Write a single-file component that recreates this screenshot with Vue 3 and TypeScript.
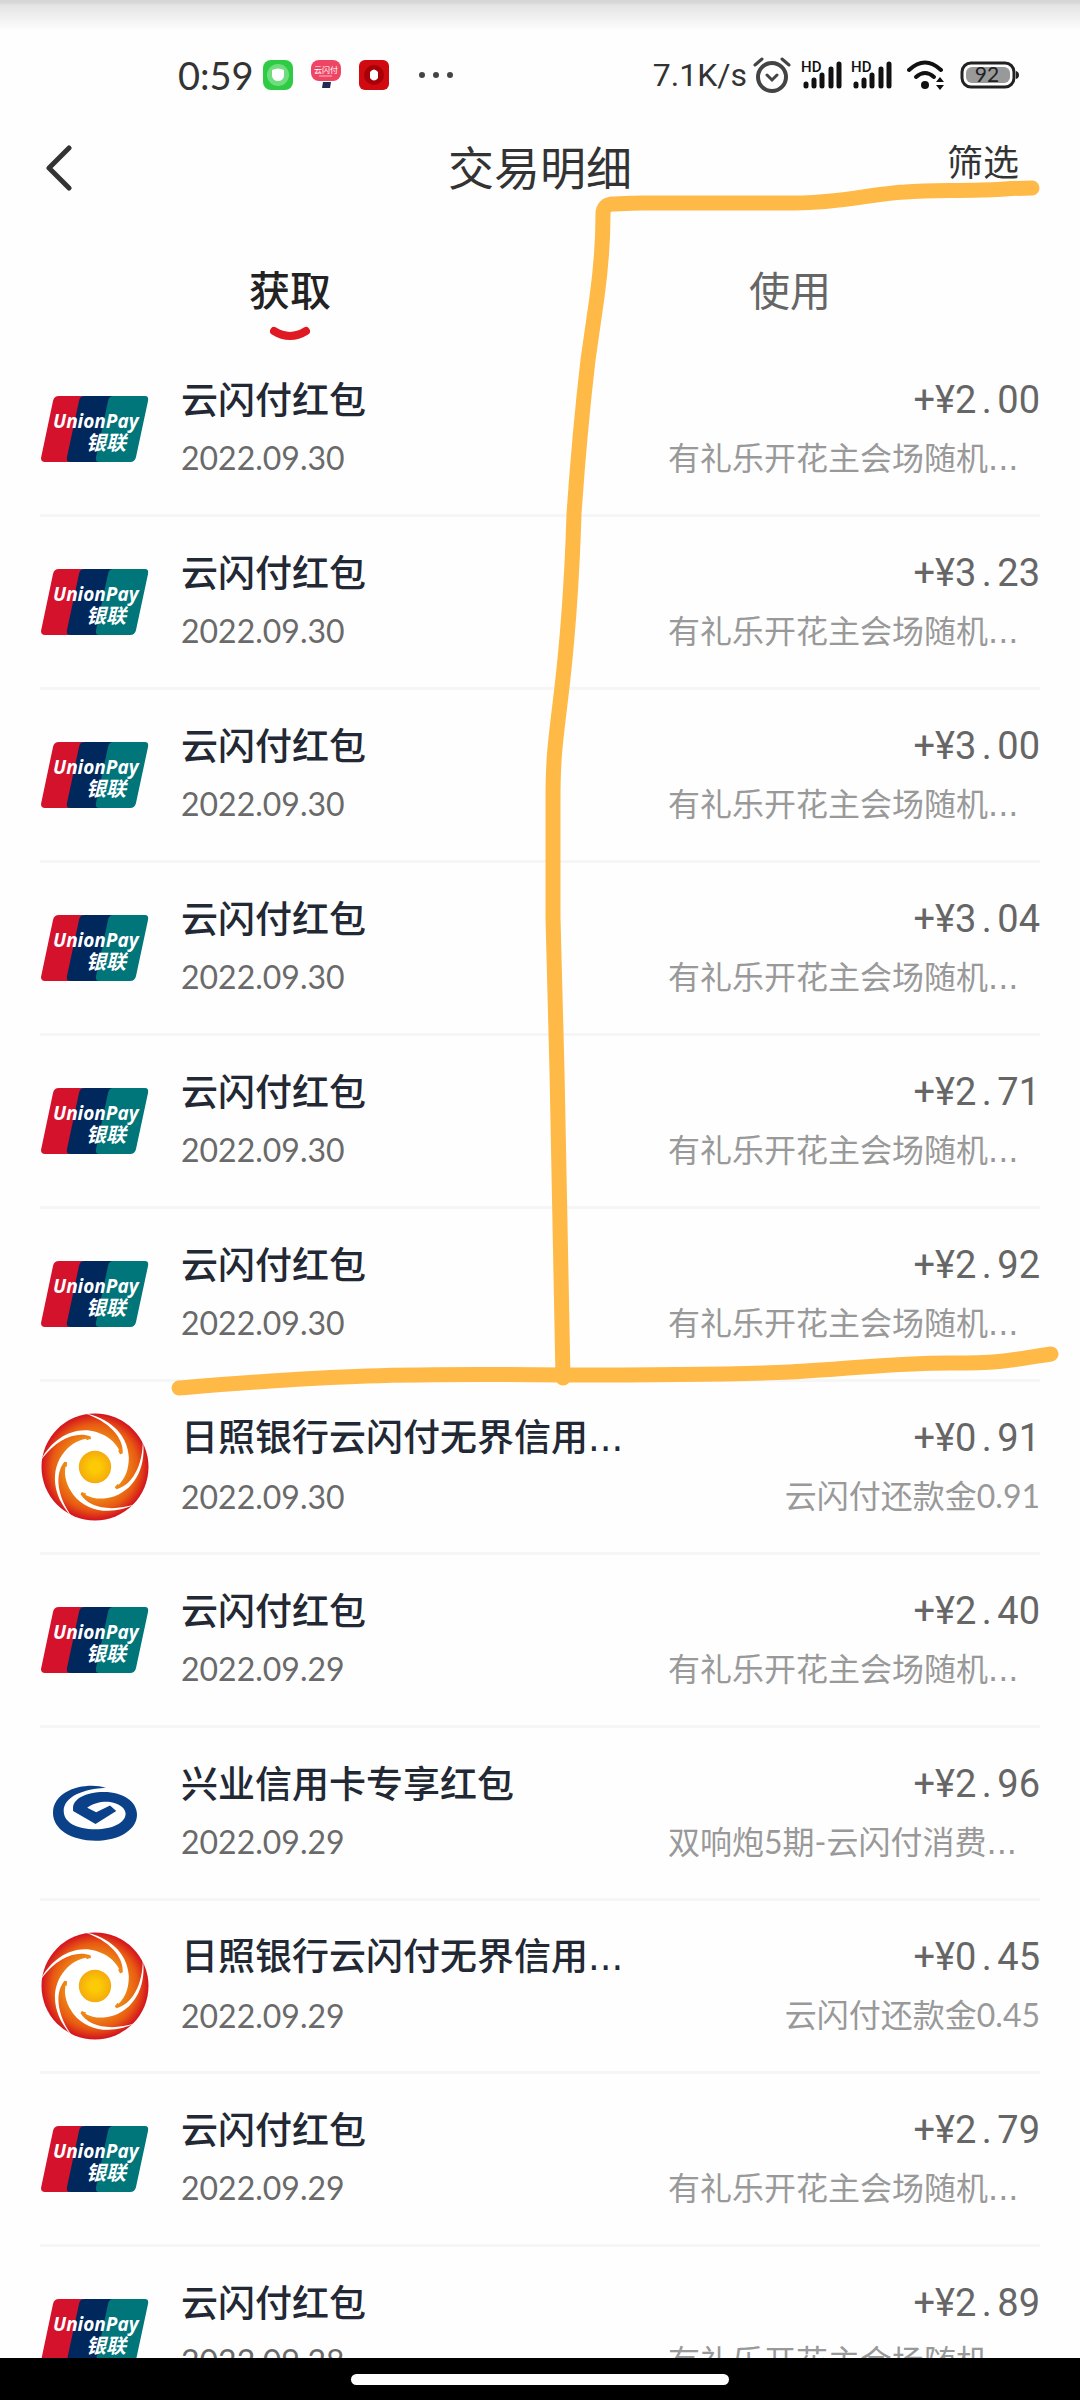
<script setup lang="ts">
import { ref } from 'vue'

type Logo = 'unionpay' | 'rizhao' | 'xingye'

interface Entry {
  logo: Logo
  name: string
  date: string
  amount: string
  note: string
  cut?: boolean
  nameCut?: boolean
}

const promo = '有礼乐开花主会场随机'

const packet = (date: string, amount: string): Entry => ({
  logo: 'unionpay',
  name: '云闪付红包',
  date,
  amount,
  note: promo,
  cut: true,
})

const rebate = (date: string, amount: string): Entry => ({
  logo: 'rizhao',
  name: '日照银行云闪付无界信用',
  nameCut: true,
  date,
  amount,
  note: '云闪付还款金' + amount,
})

const entries: Entry[] = [
  packet('2022.09.30', '2.00'),
  packet('2022.09.30', '3.23'),
  packet('2022.09.30', '3.00'),
  packet('2022.09.30', '3.04'),
  packet('2022.09.30', '2.71'),
  packet('2022.09.30', '2.92'),
  rebate('2022.09.30', '0.91'),
  packet('2022.09.29', '2.40'),
  {
    logo: 'xingye',
    name: '兴业信用卡专享红包',
    date: '2022.09.29',
    amount: '2.96',
    note: '双响炮5期-云闪付消费',
    cut: true,
  },
  rebate('2022.09.29', '0.45'),
  packet('2022.09.29', '2.79'),
  packet('2022.09.28', '2.89'),
]

const tabs = ['获取', '使用']
const active = ref(0)
const blades = [0, 72, 144, 216, 288]
</script>

<template>
  <div class="app">
    <div class="status">
      <div class="status-left">
        <span class="clock">0:59</span>
        <svg class="badge" viewBox="0 0 32 32">
          <rect x="1" y="1" width="30" height="30" rx="8" fill="#2fcb45" />
          <circle cx="16" cy="16" r="11" fill="#6fdd7c" />
          <path d="M10 11 Q16 8 22 11 L22 17 Q21 22 16 22 Q11 22 10 17 Z" fill="#fff" />
        </svg>
        <svg class="badge" viewBox="0 0 32 32">
          <path d="M13 23 L21 23 L20 29 L12 29 Z" fill="#1d2c50" />
          <rect x="1" y="1" width="30" height="21" rx="8" fill="#ee4565" />
          <text x="16" y="14" text-anchor="middle" font-size="8" fill="#fff">云闪付</text>
          <path d="M9 17 H22" stroke="#ffb8c4" stroke-width="1" />
        </svg>
        <svg class="badge" viewBox="0 0 32 32">
          <rect x="1" y="1" width="30" height="30" rx="6" fill="#d00a10" />
          <circle cx="16" cy="16" r="10" fill="#a80008" />
          <path d="M12 13 Q16 8 20 13 L20 19 Q16 24 12 19 Z" fill="#fff" />
        </svg>
        <svg class="more" viewBox="0 0 34 8">
          <g fill="#444">
            <circle cx="3" cy="4" r="3" />
            <circle cx="17" cy="4" r="3" />
            <circle cx="31" cy="4" r="3" />
          </g>
        </svg>
      </div>
      <div class="status-right">
        <span class="speed">7.1K/s</span>
        <svg class="alarm" viewBox="0 0 38 36" fill="none" stroke="#444" stroke-width="4" stroke-linecap="round">
          <circle cx="19" cy="20" r="14" />
          <path d="M14 18 L19 23 L24 18 M2 8 L9 2 M29 2 L36 8" stroke-width="3" />
        </svg>
        <svg v-for="n in 2" :key="n" class="signal" viewBox="0 0 42 32">
          <text x="0" y="13" font-size="15" font-weight="500" fill="#111">HD</text>
          <g stroke="#111" stroke-width="5" stroke-linecap="round">
            <path d="M5 25 V27 M13 21 V27 M21 16 V27 M30 10 V27 M38 5 V27" />
          </g>
        </svg>
        <svg class="wifi" viewBox="0 0 38 32">
          <g fill="none" stroke="#111" stroke-width="4" stroke-linecap="round">
            <path d="M2 11 Q18 -4 34 11" />
            <path d="M9 18 Q18 10 27 18" />
          </g>
          <circle cx="18" cy="26" r="4" fill="#111" />
          <path d="M29 23 L33 18 L37 23 Z M29 26 L33 31 L37 26 Z" fill="#111" />
        </svg>
        <svg class="battery" viewBox="0 0 60 28">
          <rect x="2" y="2" width="52" height="24" rx="9" fill="none" stroke="#222" stroke-width="3" />
          <rect x="6" y="6" width="44" height="16" rx="6" fill="#999" />
          <path d="M56 10 Q59 11 59 14 Q59 17 56 18 Z" fill="#222" />
          <text x="27" y="21" text-anchor="middle" font-size="21" fill="#222">92</text>
        </svg>
      </div>
    </div>

    <header class="bar">
      <button class="back" type="button" aria-label="返回">
        <svg viewBox="0 0 26 46">
          <path d="M23 3 L3 23 L23 43" fill="none" stroke="#333" stroke-width="5" stroke-linecap="round" stroke-linejoin="round" />
        </svg>
      </button>
      <h1>交易明细</h1>
      <button class="filter" type="button">筛选</button>
    </header>

    <nav class="tabs">
      <button
        v-for="(tab, i) in tabs"
        :key="tab"
        type="button"
        class="tab"
        :class="{ on: i === active }"
        @click="active = i"
      >
        {{ tab }}
        <svg v-if="i === active" class="smile" viewBox="0 0 40 16">
          <path d="M4 5 Q20 15 36 5" fill="none" stroke="#e01a22" stroke-width="8" stroke-linecap="round" />
        </svg>
      </button>
    </nav>

    <ul class="list">
      <li v-for="(e, i) in entries" :key="i" class="row">
        <div class="logo">
          <svg v-if="e.logo === 'unionpay'" width="108" height="66" viewBox="0 0 108 66">
            <path d="M18 0 H42 L28 66 H4 Q0 66 0 62 L12 5 Q13 0 18 0 Z" fill="#d4122c" />
            <path d="M43 0 H76 V66 H29 Q25 66 26 61 L38 5 Q39 0 43 0 Z" fill="#00285c" />
            <path d="M72 0 H104 Q108 0 107 5 L95 61 Q94 66 89 66 H58 Q54 66 55 61 L67 5 Q68 0 72 0 Z" fill="#00757a" />
            <text class="up-en" x="12" y="32">UnionPay</text>
            <text class="up-cn" x="45" y="54">银联</text>
          </svg>
          <svg v-else-if="e.logo === 'rizhao'" width="108" height="108" viewBox="0 0 107 107">
            <defs>
              <radialGradient :id="'flame' + i" gradientUnits="userSpaceOnUse" cx="53.5" cy="53.5" r="53">
                <stop offset="0.55" stop-color="#ee8a16" />
                <stop offset="0.8" stop-color="#e85a12" />
                <stop offset="1" stop-color="#d3121f" />
              </radialGradient>
              <radialGradient :id="'sun' + i">
                <stop offset="0.3" stop-color="#fccb05" />
                <stop offset="1" stop-color="#f5ab0c" />
              </radialGradient>
            </defs>
            <circle cx="53.5" cy="53.5" r="53" :fill="`url(#flame${i})`" />
            <circle cx="53.5" cy="53.5" r="28" fill="#fff" />
            <path
              v-for="a in blades"
              :key="a"
              d="M42 0 C66 4 86 20 87 44 C87 55 84 64 77 71 L53 53 L81 40 C82 25 68 8 42 0 Z"
              fill="#fff"
              :transform="`rotate(${a} 53.5 53.5)`"
            />
            <circle cx="53.5" cy="53.5" r="16" :fill="`url(#sun${i})`" />
          </svg>
          <svg v-else width="84" height="56" viewBox="97 147 243 162">
            <path
              d="M250 155 C200 138 97 156 97 228 C97 275 150 308 220 308 C290 308 340 275 340 232 C340 195 300 167 245 167 C190 167 155 188 155 213 L155 222 L220 260 L280 222 L262 206 L222 226 L196 213 C215 198 240 194 262 196 C290 200 307 215 307 230 C307 255 270 275 220 275 C165 275 128 255 128 222 C128 190 165 160 250 155 Z"
              fill="#0b4189"
            />
          </svg>
        </div>
        <div class="what">
          <p class="name">{{ e.name }}<span v-if="e.nameCut" class="dots">...</span></p>
          <p class="date">{{ e.date }}</p>
        </div>
        <div class="sum">
          <p class="amount">+¥{{ e.amount[0] }}<span class="point">.</span>{{ e.amount.slice(2) }}</p>
          <p class="note" :class="{ cut: e.cut }">{{ e.note }}<span v-if="e.cut" class="dots">...</span></p>
        </div>
      </li>
    </ul>

    <div class="home"><span class="pill"></span></div>

    <svg class="marker" viewBox="0 0 1080 2400" preserveAspectRatio="xMidYMin meet">
      <g fill="none" stroke="#ffb946" stroke-width="15" stroke-linecap="round" stroke-linejoin="round">
        <path
          d="M1032 188 C1010 188 1000 190 981 190 C950 191 930 190 905 192 C870 194 840 203 795 203 L643 203 C625 203 618 204 612 204 Q603 205 603 214 C603 250 600 275 597 297 L588 360 C581 420 577 470 574 514 C572 580 568 640 560 704 C555 745 553 760 553 800 L553 918 L557 1071 L560 1224 L563 1378"
        />
        <path
          d="M179 1388 C240 1383 300 1378 367 1376 C430 1374 480 1374 563 1375 C640 1375 720 1375 790 1372 C850 1369 890 1363 950 1363 C1010 1363 1015 1359 1051 1354"
        />
      </g>
    </svg>
  </div>
</template>

<style>
body {
  margin: 0;
  background: #fefefe;
}
</style>

<style scoped>
.app {
  position: relative;
  display: flex;
  flex-direction: column;
  height: 100vh;
  overflow: hidden;
  background: #fefefe;
  font-family: Lato, 'Noto Sans CJK SC', sans-serif;
  color: #333;
}

p,
h1,
ul {
  margin: 0;
  padding: 0;
}

button {
  border: 0;
  padding: 0;
  background: none;
  font-family: inherit;
  color: inherit;
  cursor: pointer;
}

svg {
  display: block;
  flex: none;
}

.status {
  box-sizing: border-box;
  flex: none;
  display: flex;
  justify-content: space-between;
  align-items: center;
  height: 120px;
  padding: 30px 60px 0 178px;
  background: linear-gradient(#d6d6d6 0, #d8d8d8 3px, #e4e4e4 5px, #fefefe 31px);
}

.status-left,
.status-right {
  display: flex;
  align-items: center;
}

.clock {
  width: 84px;
  font-size: 38px;
  line-height: 44px;
}

.badge {
  width: 32px;
  height: 32px;
  margin-right: 16px;
}

.more {
  width: 34px;
  height: 8px;
  margin-left: 13px;
}

.speed {
  margin-right: 6px;
  font-family: Roboto, sans-serif;
  font-size: 32px;
  line-height: 44px;
}

.alarm {
  width: 38px;
  height: 36px;
  margin-right: 10px;
}

.signal {
  width: 42px;
  height: 32px;
  margin-right: 8px;
  font-family: Roboto, sans-serif;
}

.wifi {
  width: 38px;
  height: 32px;
  margin: 0 15px 0 6px;
}

.battery {
  width: 60px;
  height: 28px;
}

.bar {
  flex: none;
  display: grid;
  grid-template-columns: 1fr auto 1fr;
  align-items: center;
  height: 96px;
  padding: 0 46px;
}

.back {
  justify-self: start;
}

.back svg {
  width: 26px;
  height: 46px;
}

h1 {
  font-size: 46px;
  line-height: 56px;
  font-weight: 400;
}

.filter {
  justify-self: end;
  padding: 0 15px 12px 0;
  font-size: 36px;
  line-height: 44px;
}

.tabs {
  flex: none;
  display: flex;
  height: 128px;
  padding: 0 40px;
}

.tab {
  flex: 1;
  display: flex;
  flex-direction: column;
  align-items: center;
  gap: 10px;
  padding-top: 50px;
  font-size: 41px;
  line-height: 50px;
  color: #666;
}

.tab.on {
  font-weight: 500;
  color: #222;
}

.smile {
  width: 40px;
  height: 16px;
}

.list {
  flex: 1;
  min-height: 0;
  overflow: hidden;
  margin: 0 40px;
  list-style: none;
}

.row {
  box-sizing: border-box;
  display: flex;
  align-items: center;
  height: 173px;
  border-bottom: 3px solid #f6f6f6;
}

.logo {
  flex: none;
  display: flex;
  justify-content: center;
  width: 110px;
  margin-right: 31px;
}

.up-en {
  font-family: 'Open Sans', sans-serif;
  font-size: 19px;
  font-weight: 700;
  font-style: italic;
  fill: #fff;
}

.up-cn {
  font-family: 'Noto Sans CJK SC', sans-serif;
  font-size: 20px;
  font-weight: 700;
  font-style: italic;
  fill: #fff;
}

.what {
  flex: 1;
}

.name {
  font-size: 37px;
  font-weight: 500;
  line-height: 58px;
  color: #222834;
  white-space: nowrap;
}

.date {
  font-size: 32px;
  line-height: 58px;
  color: #6a6a6a;
}

.sum {
  display: flex;
  flex-direction: column;
  align-items: flex-end;
}

.amount {
  font-family: Roboto, sans-serif;
  font-size: 38px;
  line-height: 58px;
  color: #666;
}

.point {
  display: inline-block;
  width: 21px;
  text-align: center;
}

.note {
  font-size: 32px;
  line-height: 58px;
  color: #999;
  white-space: nowrap;
}

.note.cut {
  width: 372px;
}

.dots {
  font-family: 'DejaVu Sans', sans-serif;
}

.home {
  flex: none;
  display: flex;
  justify-content: center;
  align-items: center;
  height: 42px;
  background: #000;
}

.pill {
  width: 35%;
  height: 11px;
  border-radius: 6px;
  background: #fff;
}

.marker {
  position: absolute;
  top: 0;
  left: 0;
  width: 100%;
  pointer-events: none;
}
</style>
